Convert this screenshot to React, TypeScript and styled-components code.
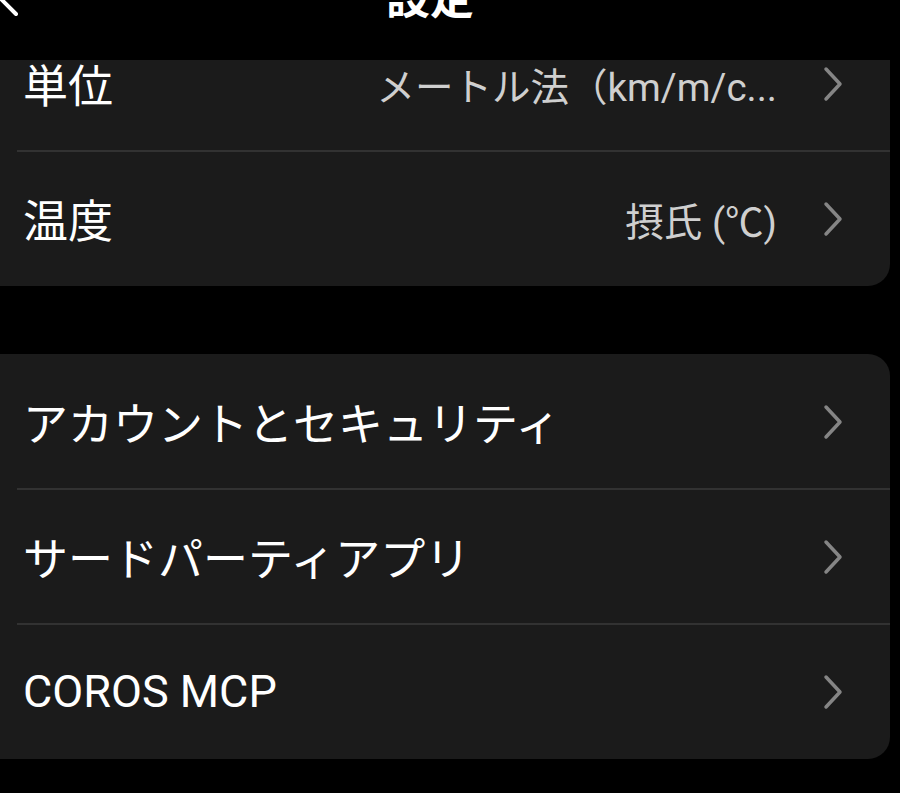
import styled, { createGlobalStyle } from "styled-components";

const GlobalStyle = createGlobalStyle`
  html, body {
    margin: 0;
    padding: 0;
    background: #000;
  }
  body {
    font-family: Roboto, "Noto Sans CJK JP", sans-serif;
    -webkit-font-smoothing: antialiased;
  }
`;

const Screen = styled.div`
  position: relative;
  width: 900px;
  height: 793px;
  overflow: hidden;
  background: #000;
`;

// fixed nav bar, the list is scrolled underneath it
const NavBar = styled.header`
  position: absolute;
  top: 0;
  left: 0;
  right: 0;
  height: 60px;
  background: #000;
  display: flex;
  justify-content: center;
  padding-right: 40px;
  overflow: hidden;
  z-index: 2;
`;

const BackButton = styled.svg`
  position: absolute;
  left: -2px;
  top: -22px;
  width: 20px;
  height: 40px;
`;

const Title = styled.h1`
  margin: -27px 0 0;
  font-family: "Noto Sans CJK JP", sans-serif;
  font-size: 44px;
  line-height: 44px;
  font-weight: 700;
  color: #fff;
`;

const List = styled.div`
  display: flex;
  flex-direction: column;
  gap: 68px;
  padding: 16px 10px 0 0;
  margin-left: -20px;
`;

const Card = styled.section`
  background: #1b1b1b;
  border-radius: 22px;
  display: flex;
  flex-direction: column;
  overflow: hidden;
`;

const Row = styled.div<{ $divider?: boolean }>`
  position: relative;
  height: 135px;
  display: flex;
  align-items: center;
  padding: 0 47px 0 43px;
  ${(p) =>
    p.$divider &&
    `
    &::after {
      content: "";
      position: absolute;
      left: 37px;
      right: 0;
      bottom: -1px;
      height: 2px;
      background: #323232;
    }
  `}
`;

const Label = styled.span`
  flex: 1;
  font-size: 45px;
  color: #fff;
  white-space: nowrap;
`;

const Value = styled.span`
  font-size: 38.5px;
  color: #cfcfcf;
  white-space: nowrap;
  margin-right: 46px;
`;

const Chevron = () => (
  <svg width="20" height="36" viewBox="0 0 20 36" fill="none">
    <path
      d="M3 3 L17 18 L3 33"
      stroke="#858585"
      strokeWidth="3.5"
      strokeLinecap="round"
      strokeLinejoin="round"
    />
  </svg>
);

interface IItem {
  label: string;
  value?: string;
}

const groups: IItem[][] = [
  [
    { label: "単位", value: "メートル法（km/m/c..." },
    { label: "温度", value: "摂氏 (℃)" },
  ],
  [
    { label: "アカウントとセキュリティ" },
    { label: "サードパーティアプリ" },
    { label: "COROS MCP" },
  ],
];

function App() {
  return (
    <Screen>
      <GlobalStyle />
      <NavBar>
        <BackButton viewBox="0 0 20 40" fill="none">
          <path
            d="M18 4 L2 20 L18 36"
            stroke="#fff"
            strokeWidth="4"
            strokeLinecap="round"
            strokeLinejoin="round"
          />
        </BackButton>
        <Title>設定</Title>
      </NavBar>
      <List>
        {groups.map((items, gi) => (
          <Card key={gi}>
            {items.map((item, i) => (
              <Row key={item.label} $divider={i < items.length - 1}>
                <Label>{item.label}</Label>
                {item.value && <Value>{item.value}</Value>}
                <Chevron />
              </Row>
            ))}
          </Card>
        ))}
      </List>
    </Screen>
  );
}

export default App;
